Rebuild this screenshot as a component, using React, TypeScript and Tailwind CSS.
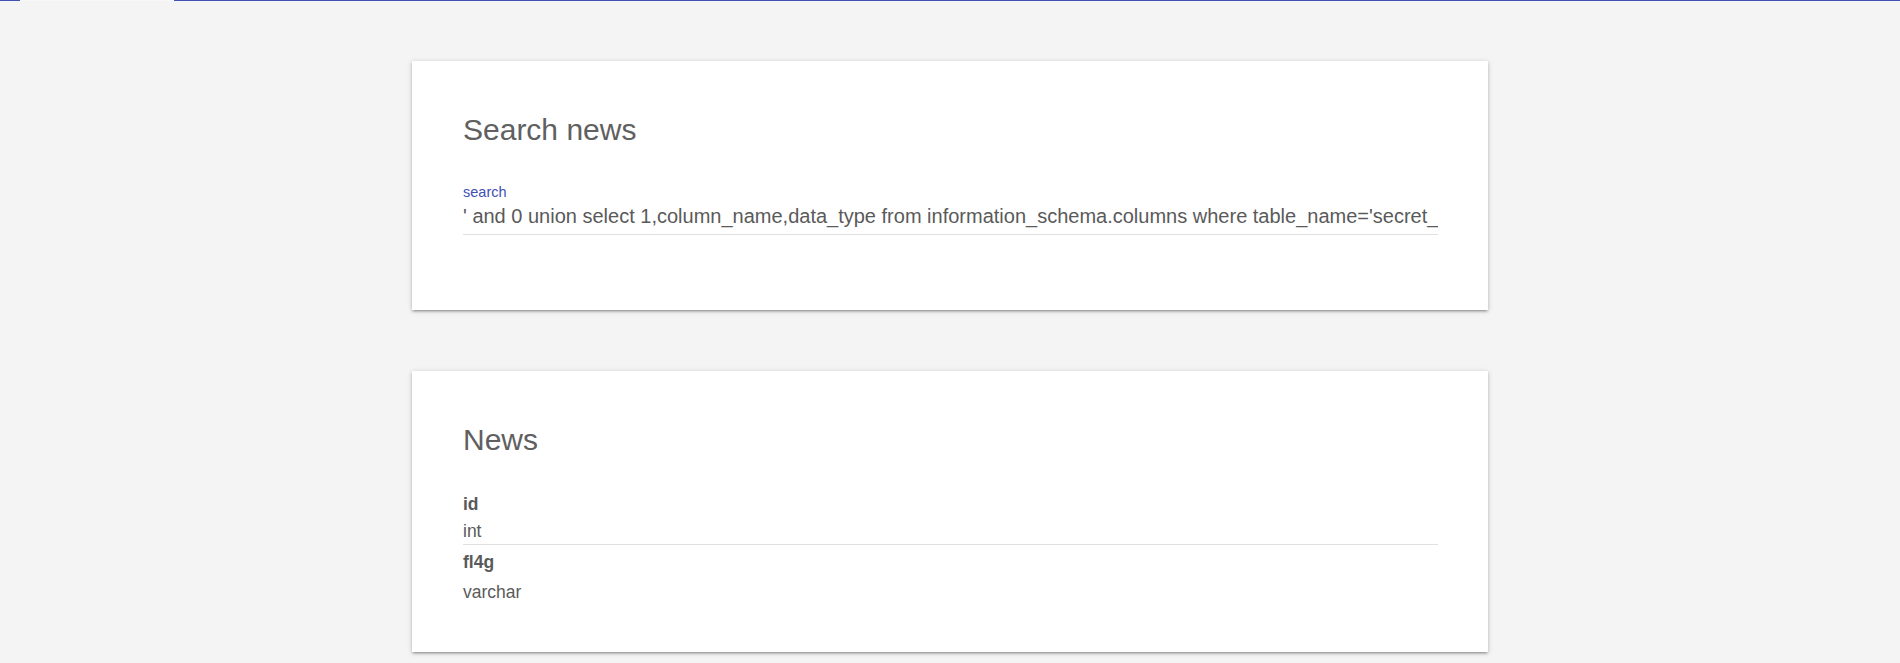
import React from "react"

// Result rows returned by the search query
const rows = [
  { name: "id", type: "int" },
  { name: "fl4g", type: "varchar" },
]

const query =
  "' and 0 union select 1,column_name,data_type from information_schema.columns where table_name='secret_table'#"

const card =
  "mx-auto w-[1076px] bg-white pl-[51px] pr-[50px] pt-[52px] shadow-[0_2px_2px_0_rgba(0,0,0,0.14),0_3px_1px_-2px_rgba(0,0,0,0.12),0_1px_5px_0_rgba(0,0,0,0.2)]"

function ProgressBar() {
  return (
    <div className="flex h-px w-full">
      <div className="w-[20px] bg-[#3f51b5]" />
      <div className="w-[154px] bg-[#f8f8f8]" />
      <div className="flex-1 bg-[#3f51b5]" />
    </div>
  )
}

function SearchCard() {
  return (
    <section className={`${card} h-[249px]`}>
      <h2 className="text-[30px] leading-[34px] font-normal text-[#606060]">Search news</h2>
      <label className="mt-[37px] block text-[14.5px] leading-[17px] text-[#3f51b5]">search</label>
      <input
        readOnly
        value={query}
        className="mt-[4px] block h-[30px] w-full border-b border-[#e0e0e0] pb-[6px] text-[20px] leading-[24px] text-[#5a5a5a] outline-none"
      />
    </section>
  )
}

function NewsCard() {
  return (
    <section className={`${card} h-[281px]`}>
      <h2 className="text-[30px] leading-[34px] font-normal text-[#606060]">News</h2>
      <ul className="mt-[33px]">
        {rows.map((r, i) => {
          const first = i < rows.length - 1
          return (
            <li key={r.name} className={first ? "border-b border-[#e0e0e0]" : "pt-[3px]"}>
              <div
                className={`text-[17.5px] font-bold text-[#5a5a5a] ${
                  first ? "leading-[29px]" : "leading-[28px]"
                }`}
              >
                {r.name}
              </div>
              <div
                className={`text-[17.5px] text-[#5a5a5a] ${
                  first ? "leading-[25px]" : "mt-[2px] leading-[28px]"
                }`}
              >
                {r.type}
              </div>
            </li>
          )
        })}
      </ul>
    </section>
  )
}

export default function App() {
  return (
    <div className="min-h-[663px] bg-[#f4f4f4] font-['Liberation_Sans',Arial,sans-serif]">
      <ProgressBar />
      <main className="flex flex-col gap-[61px] pt-[60px]">
        <SearchCard />
        <NewsCard />
      </main>
    </div>
  )
}
